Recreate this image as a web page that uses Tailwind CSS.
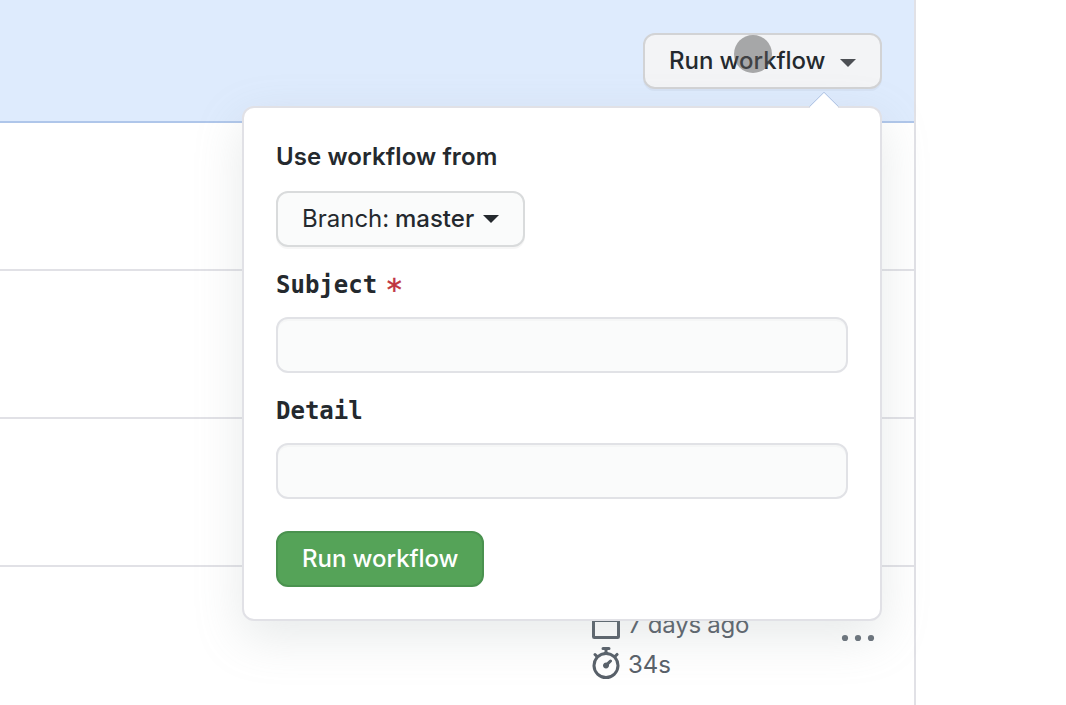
<!DOCTYPE html>
<html lang="en">
<head>
<meta charset="utf-8">
<title>Run workflow</title>
<script src="https://cdn.jsdelivr.net/npm/@tailwindcss/browser@4"></script>
</head>
<body class="bg-white font-['Inter',sans-serif] text-2xl text-[#24292e]">
<div class="relative h-[705px] w-[1066px] overflow-hidden">
  <main class="flex h-full w-[916px] flex-col border-r-2 border-[#e1e1e6]">
    <header class="flex h-[123px] shrink-0 items-start justify-end border-b-2 border-[#afc6ea] bg-[#deebfd] pt-[33px] pr-8">
      <button class="flex h-14 w-[239px] items-center rounded-xl border-2 border-[#d2d3d5] bg-[#f3f4f6] pl-6 font-medium shadow-[0_2px_0_rgba(27,31,35,0.04)]">
        <span class="w-[156px] tracking-[-0.05px] whitespace-nowrap">Run workflow</span>
        <svg class="mt-1 ml-[15px] h-2 w-4" viewBox="0 0 16 8" fill="#4c4f54"><path d="M0 0h16L8 8z"/></svg>
      </button>
    </header>
    <div class="h-[148px] shrink-0 border-b-2 border-[#e1e1e6]"></div>
    <div class="h-[148px] shrink-0 border-b-2 border-[#e1e1e6]"></div>
    <div class="h-[148px] shrink-0 border-b-2 border-[#e1e1e6]"></div>
    <section class="flex flex-1 items-start justify-between text-[#586069]">
      <div class="pt-[38px] pl-[590px]">
        <div class="flex h-10 items-center gap-[6px]">
          <svg class="h-8 w-8 shrink-0" viewBox="0 0 16 16" fill="none" stroke="#586069" stroke-width="1.5"><rect x="1.75" y="2.75" width="12.500" height="11.500" rx=".4"/><path d="M1.750 5.800h12.500M5 0v3M11 0v3"/></svg>
          <span class="tracking-[-0.25px] whitespace-nowrap">7 days ago</span>
        </div>
        <div class="flex h-10 items-center gap-[6px]">
          <svg class="-mt-1 h-8 w-8 shrink-0" viewBox="0 0 16 16" fill="#586069"><path fill-rule="evenodd" d="M5.75.75A.75.75 0 016.5 0h3a.75.75 0 010 1.5h-.75v1l-.001.041a6.718 6.718 0 013.464 1.435l.007-.006.75-.75a.75.75 0 111.06 1.06l-.75.75-.006.007a6.75 6.75 0 11-10.548 0L2.72 5.03l-.75-.75a.75.75 0 011.06-1.06l.75.75.007.006A6.718 6.718 0 017.25 2.541a.756.756 0 010-.041v-1H6.5a.75.75 0 01-.75-.75zM8 14.5A5.25 5.25 0 108 4a5.25 5.25 0 000 10.5zm.389-6.7l1.33-1.33a.75.75 0 111.061 1.06L9.45 8.861A1.502 1.502 0 018 10.75a1.5 1.5 0 11.389-2.95z"/></svg>
          <span class="whitespace-nowrap">34s</span>
        </div>
      </div>
      <svg class="mt-[67px] mr-[38px] h-2 w-9 shrink-0" viewBox="0 0 36 8" fill="#6a727b"><circle cx="5" cy="4" r="3.1"/><circle cx="18" cy="4" r="3.1"/><circle cx="31" cy="4" r="3.1"/></svg>
    </section>
  </main>

  <div class="absolute top-[106px] left-[242px] flex h-[515px] w-[640px] flex-col items-start rounded-xl border-2 border-[#e1e1e6] bg-white px-8 pt-[31px] shadow-[0_16px_48px_rgba(145,158,160,0.22)]">
    <svg class="absolute -top-4 left-[564px] h-4 w-8" viewBox="0 0 32 16"><path d="M2 15L16 1l14 14v1H2z" fill="#fff"/><path d="M1.500 14.500L16 .2l14.500 14.300" fill="none" stroke="#b4c6e4"/></svg>
    <h2 class="flex h-9 items-center font-semibold tracking-[0.1px] whitespace-nowrap">Use workflow from</h2>
    <button class="mt-4 flex h-14 w-[249px] shrink-0 items-center rounded-xl border-2 border-[#d9dbdc] bg-[#fafbfb] pl-6 whitespace-nowrap shadow-[0_2px_0_rgba(27,31,35,0.04)]">
      <span class="w-[87px]">Branch:</span><span class="ml-[6px] font-medium">master</span>
      <svg class="ml-[9px] h-2 w-4" viewBox="0 0 16 8" fill="#24292e"><path d="M0 0h16L8 8z"/></svg>
    </button>
    <label class="mt-5 flex h-9 items-center font-['DejaVu_Sans_Mono',monospace] font-bold">Subject<span class="mt-[10px] ml-[8px] text-[30px] leading-none font-normal text-[#c0343c] [-webkit-text-stroke:0.5px_#c0343c]">*</span></label>
    <div class="mt-[14px] h-14 w-[572px] shrink-0 rounded-xl border-2 border-[#e1e2e6] bg-[#fafbfb] shadow-[inset_0_2px_0_rgba(225,228,232,0.2)]"></div>
    <label class="mt-5 flex h-9 items-center font-['DejaVu_Sans_Mono',monospace] font-bold">Detail</label>
    <div class="mt-[14px] h-14 w-[572px] shrink-0 rounded-xl border-2 border-[#e1e2e6] bg-[#fafbfb] shadow-[inset_0_2px_0_rgba(225,228,232,0.2)]"></div>
    <button class="mt-8 flex h-14 w-52 shrink-0 items-center rounded-xl border-2 border-[#4a924f] bg-[#55a358] pl-6 font-medium tracking-[-0.05px] whitespace-nowrap text-white">Run workflow</button>
  </div>
  <div class="absolute top-[35px] left-[734px] h-[38px] w-[38px] rounded-full bg-[#5a5a5a]/50"></div>
</div>
</body>
</html>
